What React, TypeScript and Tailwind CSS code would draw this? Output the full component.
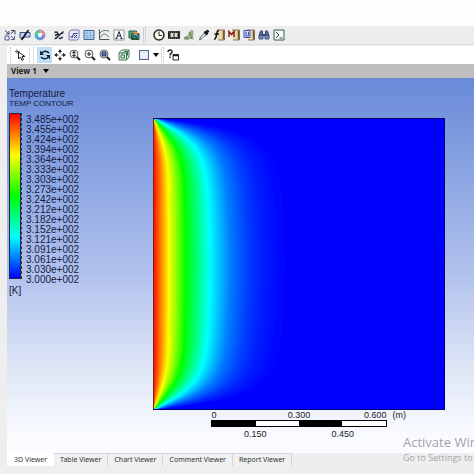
import React from 'react';

type IconProps = { children: React.ReactNode };

const Icon = ({ children }: IconProps) => (
  <svg className="h-3 w-3" viewBox="0 0 24 24" fill="none" stroke="currentColor" strokeWidth={2}>
    {children}
  </svg>
);

const ToolButton = ({ label, active, children }: { label: string; active?: boolean; children: React.ReactNode }) => (
  <button
    type="button"
    aria-label={label}
    title={label}
    className={`flex h-4 w-[15px] shrink-0 items-center justify-center ${active ? 'bg-[#bfdff5]' : ''}`}
  >
    <Icon>{children}</Icon>
  </button>
);

const Separator = () => <span className="mx-px h-4 w-0 border-l border-dotted border-[#c0c0c0]" />;

// Sheet of paper used behind the letter icons
const Sheet = () => (
  <>
    <path d="M8 2h15v20H10" fill="#ead9a6" stroke="#8b7648" />
    <path d="M21 3v18" stroke="#6c5a36" strokeWidth={3} />
  </>
);

const mainTools = [
  {
    label: 'Location',
    icon: (
      <>
        <path d="M2 3l8 7M10 4v6H4M13 10l8-7M14 3h8v8" stroke="#35405e" />
        <path d="M2 14h8v8H2zM14 14l7 7M21 14v7h-7" stroke="#536194" />
      </>
    ),
  },
  {
    label: 'Plane',
    icon: (
      <>
        <path d="M2 7h11l-3 11H2zM14 7h8v9H11" fill="#c6d5f7" stroke="#3e4c7c" />
        <path d="M5 22L19 2" stroke="#111" strokeWidth={3} />
      </>
    ),
  },
  {
    label: 'Color',
    icon: (
      <>
        <g strokeWidth={6}>
          <path d="M12 5a7 7 0 0 1 7 7" stroke="#f3939f" />
          <path d="M19 12a7 7 0 0 1-7 7" stroke="#927be4" />
          <path d="M12 19a7 7 0 0 1-7-7" stroke="#35b4d5" />
          <path d="M5 12a7 7 0 0 1 7-7" stroke="#55d28c" />
        </g>
        <circle cx="12" cy="12" r="4" fill="#f4f8fb" stroke="none" />
        <circle cx="12" cy="12" r="10" stroke="#5b7087" strokeWidth={1} />
      </>
    ),
  },
];

const objectTools = [
  {
    label: 'Streamline',
    icon: <path d="M3 7c8-5 6 9 11 4l7-6M3 19c8 1 9-13 17-10M4 13l6-3M12 18c3 3 4-2 8-1" stroke="#202b42" strokeWidth={3} />,
  },
  {
    label: 'Expression',
    icon: (
      <>
        <path d="M2 6L6 2h16v17l-4 3H2z" fill="#e5e9fa" stroke="#7480a6" />
        <path d="M5 14l3 4 3-9h8M12 12l6 6M18 12l-6 6" stroke="#3b3f87" />
      </>
    ),
  },
  {
    label: 'Table',
    icon: (
      <>
        <path d="M2 3h20v18H2z" fill="#bfdcf5" stroke="#41689d" />
        <path d="M2 8h20M2 13h20M2 17h20M8 3v18M15 3v18" stroke="#6590bd" strokeWidth={1} />
      </>
    ),
  },
  {
    label: 'Chart',
    icon: (
      <>
        <path d="M3 1v20h20" stroke="#46545c" />
        <path d="M4 8c7-7 9-5 18-4M5 17c5-10 10-8 17-1" stroke="#4e7964" />
      </>
    ),
  },
  {
    label: 'Comment',
    icon: (
      <>
        <path d="M2 2h20v20H2z" fill="#fff" stroke="#8a9199" />
        <path d="M7 19l5-14 5 14M9 14h6M5 19h4M15 19h4" stroke="#17213a" />
      </>
    ),
  },
  {
    label: 'Figure',
    icon: (
      <>
        <path d="M2 4h15v14H2z" fill="#58b368" stroke="#26544a" />
        <path d="M7 9h15v12H7z" fill="#317dcc" stroke="#26544a" />
        <circle cx="15" cy="9" r="4" fill="#e08a3c" stroke="none" />
        <path d="M8 19l5-7 6 7z" fill="#2fa750" stroke="#194c24" />
      </>
    ),
  },
];

const utilityTools = [
  {
    label: 'Timestep selector',
    icon: (
      <>
        <circle cx="12" cy="12" r="10" fill="#f9f9ee" stroke="#2a2a25" strokeWidth={3} />
        <path d="M12 5v8h6" stroke="#2a2a25" />
      </>
    ),
  },
  {
    label: 'Animation',
    icon: (
      <>
        <path d="M1 5h22v14H1z" fill="#252525" stroke="#252525" />
        <path d="M5 8h6v8H5zM13 8h6v8h-6z" fill="#d8e0d8" stroke="none" />
        <path d="M2 6h20M2 18h20" stroke="#ddd" strokeWidth={1} strokeDasharray="2 2" />
      </>
    ),
  },
  {
    label: 'Quick editor',
    icon: (
      <>
        <path d="M2 20l4-5 4-1 2-6 4-5 4 1-1 12 2 4-6-1-7 2z" fill="#9fbd85" stroke="#93a685" />
        <path d="M3 17l8 1M14 6l3 13" stroke="#686b45" />
      </>
    ),
  },
  {
    label: 'Probe',
    icon: (
      <>
        <path d="M3 22l2-6L15 6l3 3L8 19z" fill="#e8edf0" stroke="#5d646c" />
        <path d="M13 5l6 6M16 8l5-5" stroke="#101827" strokeWidth={5} />
      </>
    ),
  },
  {
    label: 'Function calculator',
    icon: (
      <>
        <Sheet />
        <path d="M12 4c-4-2-4 3-5 8s-2 9-5 8M3 10h9" stroke="#111" strokeWidth={3} />
      </>
    ),
  },
  {
    label: 'Macro calculator',
    icon: (
      <>
        <Sheet />
        <path d="M2 16V5l5 6 5-6v11" stroke="#8f1f1c" strokeWidth={3} />
      </>
    ),
  },
  {
    label: 'Mesh calculator',
    icon: (
      <>
        <Sheet />
        <path d="M2 3h12v14H2z" fill="#ccd5ff" stroke="#4254af" />
        <path d="M6 6v8h5V6" stroke="#4254af" />
      </>
    ),
  },
  {
    label: 'Case comparison',
    icon: (
      <>
        <path d="M5 4h4v7h6V4h4l3 9H2z" fill="#53699b" stroke="#34456f" />
        <path d="M2 13h8v7H2zM14 13h8v7h-8z" fill="#7c93c6" stroke="#3d4f7c" />
      </>
    ),
  },
  {
    label: 'Command editor',
    icon: (
      <>
        <path d="M2 2h20v20H2z" fill="#f3fbf5" stroke="#3e5752" />
        <path d="M6 6l6 6-6 6M13 18h6" stroke="#304b46" />
      </>
    ),
  },
];

const Lens = ({ children }: IconProps) => (
  <>
    <circle cx="10" cy="10" r="8" fill="#f1f3f5" stroke="#5d6369" />
    <path d="M16 16l6 6" stroke="#222" strokeWidth={4} />
    {children}
  </>
);

const legendValues = [
  '3.485e+002', '3.455e+002', '3.424e+002', '3.394e+002', '3.364e+002', '3.333e+002',
  '3.303e+002', '3.273e+002', '3.242e+002', '3.212e+002', '3.182e+002', '3.152e+002',
  '3.121e+002', '3.091e+002', '3.061e+002', '3.030e+002', '3.000e+002',
];

const tabs = ['3D Viewer', 'Table Viewer', 'Chart Viewer', 'Comment Viewer', 'Report Viewer'];

const SIZE = 292;

// How far each normalised temperature reaches from the hot wall at mid height
const reach = [
  [0, 146], [0.01, 129], [0.03, 113], [0.06, 98], [0.125, 79],
  [0.25, 58], [0.5, 33], [0.75, 16], [1, 0],
];

function depthAt(u: number) {
  for (let i = 1; i < reach.length; i++) {
    const [u0, d0] = reach[i - 1];
    const [u1, d1] = reach[i];
    if (u <= u1) return d0 + ((u - u0) / (u1 - u0)) * (d1 - d0);
  }
  return 0;
}

function rainbow(u: number) {
  const t = u * 4;
  const c = (v: number) => Math.round(Math.max(0, Math.min(1, v)) * 255);
  return `rgb(${c(t - 2)},${t < 3 ? c(t) : c(4 - t)},${c(2 - t)})`;
}

// Each line fans out of the corner and flattens towards mid height
function isotherm(u: number) {
  const depth = depthAt(u);
  const slope = 1 / (Math.tan((u * Math.PI) / 2) + 0.1);
  const p = 1.5 + 3 * u;
  const upper: number[][] = [];
  for (let i = 0; i <= 100; i++) {
    const y = (SIZE / 2) * (i / 100) ** 2;
    const r = (y * slope) / depth;
    upper.push([(depth * r) / (1 + r ** p) ** (1 / p), y]);
  }
  const lower = upper.slice(0, -1).reverse().map(([x, y]) => [x, SIZE - y]);
  return `M${[...upper, ...lower].map(([x, y]) => `${x.toFixed(2)} ${y.toFixed(2)}`).join('L')}Z`;
}

const levels = Array.from({ length: 159 }, (_, i) => (i + 1) / 160);

const ContourPlot = () => (
  <svg className="block aspect-square w-full" viewBox={`0 0 ${SIZE} ${SIZE}`} role="img" aria-label="Temperature contour">
    <rect width={SIZE} height={SIZE} fill="#0000fe" />
    {levels.map((u) => (
      <path key={u} d={isotherm(u)} fill={rainbow(u)} />
    ))}
    <path d="M0 0V292" stroke="#7c1c28" strokeWidth={2} />
    <path d="M0 .5H291.5V291.5H0" fill="none" stroke="#00006e" />
  </svg>
);

const Legend = () => (
  <div className="w-[146px] shrink-0 pl-0.5 pt-2.5 text-[#141c3c]">
    <h2 className="text-[10px] leading-3">Temperature</h2>
    <p className="text-[8px] leading-2">TEMP CONTOUR</p>
    <div className="mt-1 flex gap-1">
      <div className="mt-px flex h-[166px]">
        <div className="w-3 border border-[#202840] bg-[linear-gradient(#f00,#ff0_25%,#0f0_50%,#0ff_75%,#00f)]" />
        <div className="w-0 border-r border-dashed border-[#263252]" />
      </div>
      <ul className="mt-[3px] text-[10px] leading-[10px]">
        {legendValues.map((value) => (
          <li key={value}>{value}</li>
        ))}
      </ul>
    </div>
    <p className="text-[10px] leading-3">[K]</p>
  </div>
);

const ScaleBar = () => (
  <div className="flex pl-[20%] text-[9px] leading-[10px] text-[#222]">
    <div className="w-[75%] shrink-0">
      <div className="grid grid-cols-3">
        <span>0</span>
        <span className="text-center">0.300</span>
        <span className="text-right">0.600</span>
      </div>
      <div className="grid h-[7px] grid-cols-4 border border-black bg-white">
        <span className="bg-black" />
        <span />
        <span className="bg-black" />
        <span />
      </div>
      <div className="mt-0.5 grid grid-cols-2 text-center">
        <span>0.150</span>
        <span>0.450</span>
      </div>
    </div>
    <span className="ml-1.5">(m)</span>
  </div>
);

const App: React.FC = () => {
  return (
    <div className="relative flex min-h-screen flex-col overflow-hidden bg-[#eeeeee] pb-2 font-['Liberation_Sans',Arial,sans-serif]">
      <div className="h-[26px] bg-[#fdfdfd]" />

      {/* Main toolbar */}
      <div className="flex h-[19px] items-center border-b border-[#dcdcdc] pl-0.5" role="toolbar" aria-label="Main">
        {mainTools.map((t) => <ToolButton key={t.label} label={t.label}>{t.icon}</ToolButton>)}
        <span className="w-1" />
        {objectTools.map((t) => <ToolButton key={t.label} label={t.label}>{t.icon}</ToolButton>)}
        <span className="ml-0.5 h-4 border-l border-[#cfcfcf]" />
        <Separator />
        <span className="w-1" />
        {utilityTools.map((t) => <ToolButton key={t.label} label={t.label}>{t.icon}</ToolButton>)}
      </div>

      <main className="ml-[7px] flex flex-1 flex-col">
        {/* Viewer toolbar */}
        <div className="mt-px flex h-[18px] items-center bg-white pl-0.5" role="toolbar" aria-label="Viewer">
          <Separator />
          <ToolButton label="Select">
            <path d="M2 5h9M6 1v8" stroke="#555" strokeWidth={2} />
            <path d="M9 6v14l4-4 3 7 3-2-3-6h6z" fill="#fff" stroke="#222" />
          </ToolButton>
          <span className="ml-0.5 h-4 border-l border-[#dcdcdc]" />
          <span className="w-0.5" />
          <Separator />
          <span className="w-0.5" />
          <ToolButton label="Rotate" active>
            <path d="M5 9c3-6 11-6 15-1M19 15c-3 6-11 6-15 1" stroke="#16233d" strokeWidth={3} />
            <path d="M2 3v9h8zM22 21v-9h-8z" fill="#16233d" stroke="none" />
          </ToolButton>
          <ToolButton label="Pan">
            <path d="M12 0l4 6H8zM12 24l-4-6h8zM0 12l6-4v8zM24 12l-6 4V8z" fill="#222" stroke="none" />
            <path d="M12 6v3M12 15v3M6 12h3M15 12h3" stroke="#222" strokeWidth={2} />
          </ToolButton>
          <ToolButton label="Zoom">
            <Lens><path d="M10 4l3 4H7zM10 16l-3-4h6zM10 7v6" fill="#222" stroke="#222" strokeWidth={1} /></Lens>
          </ToolButton>
          <ToolButton label="Zoom box">
            <Lens><path d="M6 10h8M10 6v8" stroke="#222" /></Lens>
          </ToolButton>
          <ToolButton label="Fit view">
            <Lens><path d="M6 6h8v8H6z" fill="#5966a5" stroke="#303b73" /></Lens>
          </ToolButton>
          <span className="w-1" />
          <ToolButton label="Highlighting">
            <path d="M2 8l5-6h15v14l-5 6H2z" fill="#e2f3e3" stroke="#3f7b54" />
            <path d="M2 8h15v14M17 8l5-6M6 12h7v6H6zM9 9l4-4h6v8" stroke="#397451" />
          </ToolButton>
          <span className="w-1" />
          <button type="button" aria-label="Viewport layout" className="flex h-4 w-6 items-center gap-1 pl-1">
            <span className="h-2.5 w-2.5 shrink-0 border border-[#566284] bg-[#e8edfb]" />
            <svg className="h-1 w-1.5 shrink-0" viewBox="0 0 6 4"><path d="M0 0h6L3 4z" /></svg>
          </button>
          <span className="ml-0.5 h-4 border-l border-[#dcdcdc]" />
          <Separator />
          <ToolButton label="Help">
            <path d="M2 6c0-6 9-5 8 0-1 3-4 3-4 7M6 15v3" stroke="#222" strokeWidth={3} />
            <path d="M12 11h11v11H12z" fill="#fff" stroke="#222" />
            <path d="M12 13h11" stroke="#222" strokeWidth={3} />
          </ToolButton>
        </div>

        <div className="flex h-3.5 items-center bg-[#bebebe] pl-1">
          <button type="button" className="flex items-center gap-1.5 font-['Noto_Sans',sans-serif] text-[8px] leading-3 font-bold text-[#222]">
            View 1
            <svg className="h-1 w-1.5" viewBox="0 0 6 4"><path d="M0 0h6L3 4z" /></svg>
          </button>
        </div>

        {/* 3D view */}
        <section className="flex flex-1 bg-[linear-gradient(#6a8ad8,#8ba5e3_25%,#b1c1ed_52%,#dfe7f6_78%,#fbfcff_97%)] pb-3.5">
          <Legend />
          <div className="mr-[29px] mt-10 min-w-0 flex-1">
            <ContourPlot />
            <ScaleBar />
          </div>
        </section>

        <nav className="flex h-[13px] font-['Noto_Sans',sans-serif] text-[7px] leading-3 text-[#333]" role="tablist">
          {tabs.map((tab, i) => (
            <button
              key={tab}
              type="button"
              role="tab"
              aria-selected={i === 0}
              className={`whitespace-nowrap ${i === 0 ? 'bg-white px-[7px]' : 'border-t border-r border-[#d5d5d5] bg-[#f0f0f0] px-1.5'}`}
            >
              {tab}
            </button>
          ))}
        </nav>
      </main>

      {/* System watermark runs past the edge of the window */}
      <div className="pointer-events-none absolute -right-12 bottom-2 w-[119px] font-['Open_Sans',sans-serif] whitespace-nowrap text-[#a3a3a7]">
        <p className="text-[13px] leading-4">Activate Windows</p>
        <p className="text-[9px] leading-4">Go to Settings to activate Windows.</p>
      </div>
    </div>
  );
};

export default App;
